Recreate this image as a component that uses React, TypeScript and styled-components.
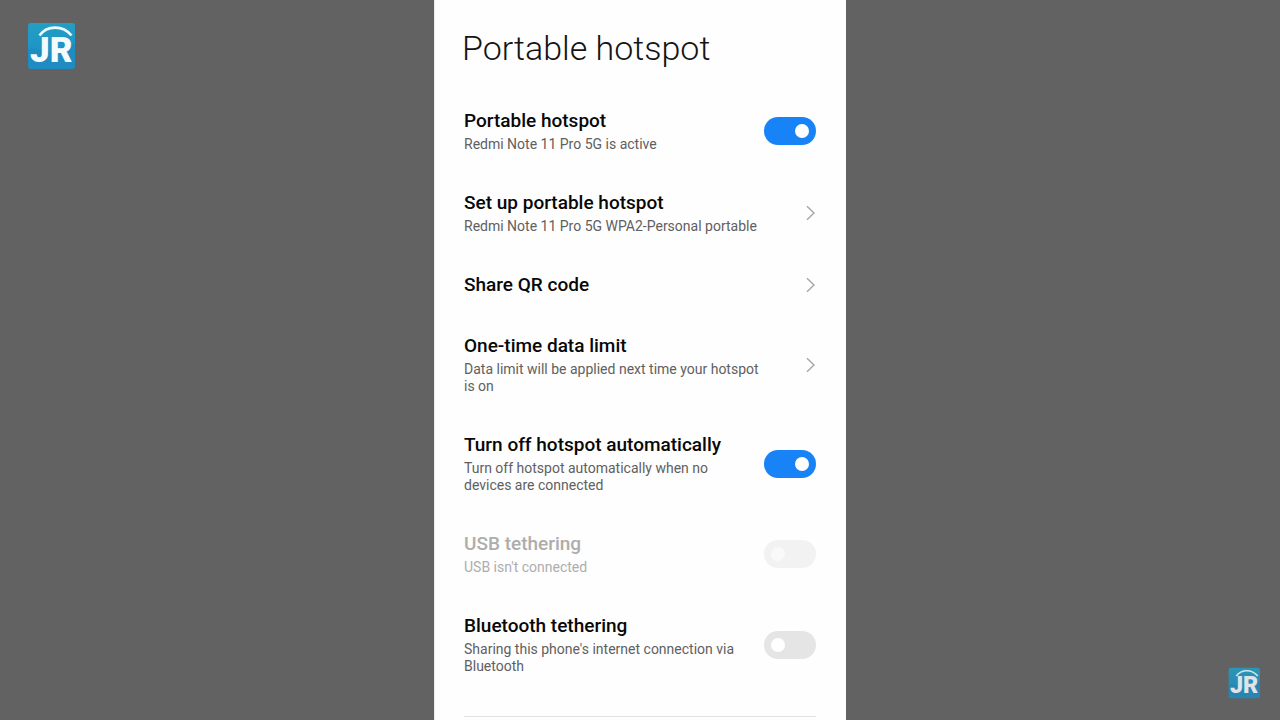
import React, { useId, useState } from 'react';
import styled, { createGlobalStyle, css } from 'styled-components';

const GlobalStyle = createGlobalStyle`
  *, *::before, *::after { box-sizing: border-box; }
  body {
    margin: 0;
    background: #626262;
    font-family: Roboto, "Liberation Sans", sans-serif;
  }
`;

const Page = styled.div`
  display: grid;
  grid-template-columns: minmax(0, 1fr) minmax(0, 412px) minmax(0, 1fr);
  min-height: 100vh;
`;

const Side = styled.aside<{ $end?: boolean }>`
  display: flex;
  justify-content: ${({ $end }) => ($end ? 'flex-end' : 'flex-start')};
  align-items: ${({ $end }) => ($end ? 'flex-end' : 'flex-start')};
  padding: ${({ $end }) => ($end ? '0 20px 21px' : '22px 27px')};
`;

const LogoSvg = styled.svg<{ $small?: boolean }>`
  display: block;
  flex: none;
  width: ${({ $small }) => ($small ? 32 : 48)}px;
  height: ${({ $small }) => ($small ? 32 : 48)}px;
  opacity: ${({ $small }) => ($small ? 0.85 : 1)};
`;

const Panel = styled.main`
  background: #fefefe;
  padding: 28px 30px 3px;
  box-shadow: inset 1px 0 #ececec;
`;

const Heading = styled.h1`
  margin: 0 0 22px -2px;
  font-size: 34px;
  line-height: 40px;
  font-weight: 300;
  color: #141414;
`;

const rowStyle = css`
  display: flex;
  align-items: center;
  gap: 18px;
  width: 100%;
  padding: 19px 0;
  text-align: left;
`;

const LinkRow = styled.button`
  ${rowStyle}
  border: 0;
  background: none;
  font: inherit;
  cursor: pointer;
`;

const Texts = styled.span`
  display: flex;
  flex: 1;
  flex-direction: column;
  gap: 4px;
  min-width: 0;
`;

const Title = styled.span`
  font-size: 19px;
  line-height: 23px;
  font-weight: 500;
  color: #080808;
`;

const Summary = styled.span`
  font-size: 14px;
  line-height: 17px;
  color: #606060;
`;

const SwitchRow = styled.div<{ $disabled?: boolean }>`
  ${rowStyle}
  ${({ $disabled }) =>
    $disabled &&
    css`
      ${Title}, ${Summary} { color: #adadad; }
    `}
`;

const Switch = styled.input`
  appearance: none;
  flex: none;
  display: flex;
  align-items: center;
  width: 52px;
  height: 28px;
  margin: 0;
  padding: 0 7px;
  border-radius: 14px;
  background: #e5e5e5;
  cursor: pointer;

  &::before {
    content: '';
    width: 14px;
    height: 14px;
    border-radius: 50%;
    background: #fff;
  }

  &:checked {
    justify-content: flex-end;
    background: #1783f6;
  }

  &:disabled {
    background: #f2f2f2;
    cursor: default;
  }

  &:disabled::before {
    background: #f9f9f9;
  }
`;

const ChevronSvg = styled.svg`
  flex: none;
  width: 30px;
  height: 16px;
`;

const Divider = styled.hr`
  height: 1px;
  margin: 22px 0 0;
  border: 0;
  background: #e2e2e2;
`;

function Logo({ small }: { small?: boolean }) {
  const id = useId();
  return (
    <LogoSvg $small={small} viewBox="0 0 48 48" role="img" aria-label="JR">
      <defs>
        <linearGradient id={id} x1="0" y1="0" x2="0" y2="1">
          <stop offset="0" stopColor="#229fc4" />
          <stop offset="0.5" stopColor="#1f95c6" />
          <stop offset="1" stopColor="#2394c6" />
        </linearGradient>
      </defs>
      <rect x="1" y="1" width="47" height="46" rx="3" fill={`url(#${id})`} />
      <path d="M1 27 C10 23 16 33 28 29 S40 20 48 22 V44 a3 3 0 0 1-3 3 H4 a3 3 0 0 1-3-3Z" fill="#146fae" opacity="0.2" />
      <path d="M12.5 13.5 C20 3 36 3 44.5 13.5" fill="none" stroke="#eefaff" strokeWidth="2.6" />
      <text x="3" y="39.5" fontFamily="Roboto, sans-serif" fontSize="35" fontWeight="900" fill="#f4fbff">
        JR
      </text>
    </LogoSvg>
  );
}

function Chevron() {
  return (
    <ChevronSvg viewBox="0 0 30 16" aria-hidden="true">
      <path d="M21 1.2 L28 8 L21 14.8" fill="none" stroke="#a6a6a6" strokeWidth="1.4" />
    </ChevronSvg>
  );
}

interface ItemProps {
  title: string;
  summary?: string;
}

function LinkItem({ title, summary }: ItemProps) {
  return (
    <LinkRow type="button">
      <Texts>
        <Title>{title}</Title>
        {summary && <Summary>{summary}</Summary>}
      </Texts>
      <Chevron />
    </LinkRow>
  );
}

function SwitchItem({ title, summary, on = false, disabled }: ItemProps & { on?: boolean; disabled?: boolean }) {
  const id = useId();
  const [checked, setChecked] = useState(on);
  return (
    <SwitchRow $disabled={disabled}>
      <Texts>
        <Title as="label" htmlFor={id}>{title}</Title>
        <Summary id={`${id}-summary`}>{summary}</Summary>
      </Texts>
      <Switch
        id={id}
        type="checkbox"
        role="switch"
        aria-describedby={`${id}-summary`}
        checked={checked}
        disabled={disabled}
        onChange={(e) => setChecked(e.target.checked)}
      />
    </SwitchRow>
  );
}

export default function App() {
  return (
    <>
      <GlobalStyle />
      <Page>
        <Side>
          <Logo />
        </Side>
        <Panel>
          <Heading>Portable hotspot</Heading>
          <SwitchItem title="Portable hotspot" summary="Redmi Note 11 Pro 5G is active" on />
          <LinkItem title="Set up portable hotspot" summary="Redmi Note 11 Pro 5G WPA2-Personal portable" />
          <LinkItem title="Share QR code" />
          <LinkItem title="One-time data limit" summary="Data limit will be applied next time your hotspot is on" />
          <SwitchItem title="Turn off hotspot automatically" summary="Turn off hotspot automatically when no devices are connected" on />
          <SwitchItem title="USB tethering" summary="USB isn't connected" disabled />
          <SwitchItem title="Bluetooth tethering" summary="Sharing this phone's internet connection via Bluetooth" />
          <Divider />
        </Panel>
        <Side $end>
          <Logo small />
        </Side>
      </Page>
    </>
  );
}
